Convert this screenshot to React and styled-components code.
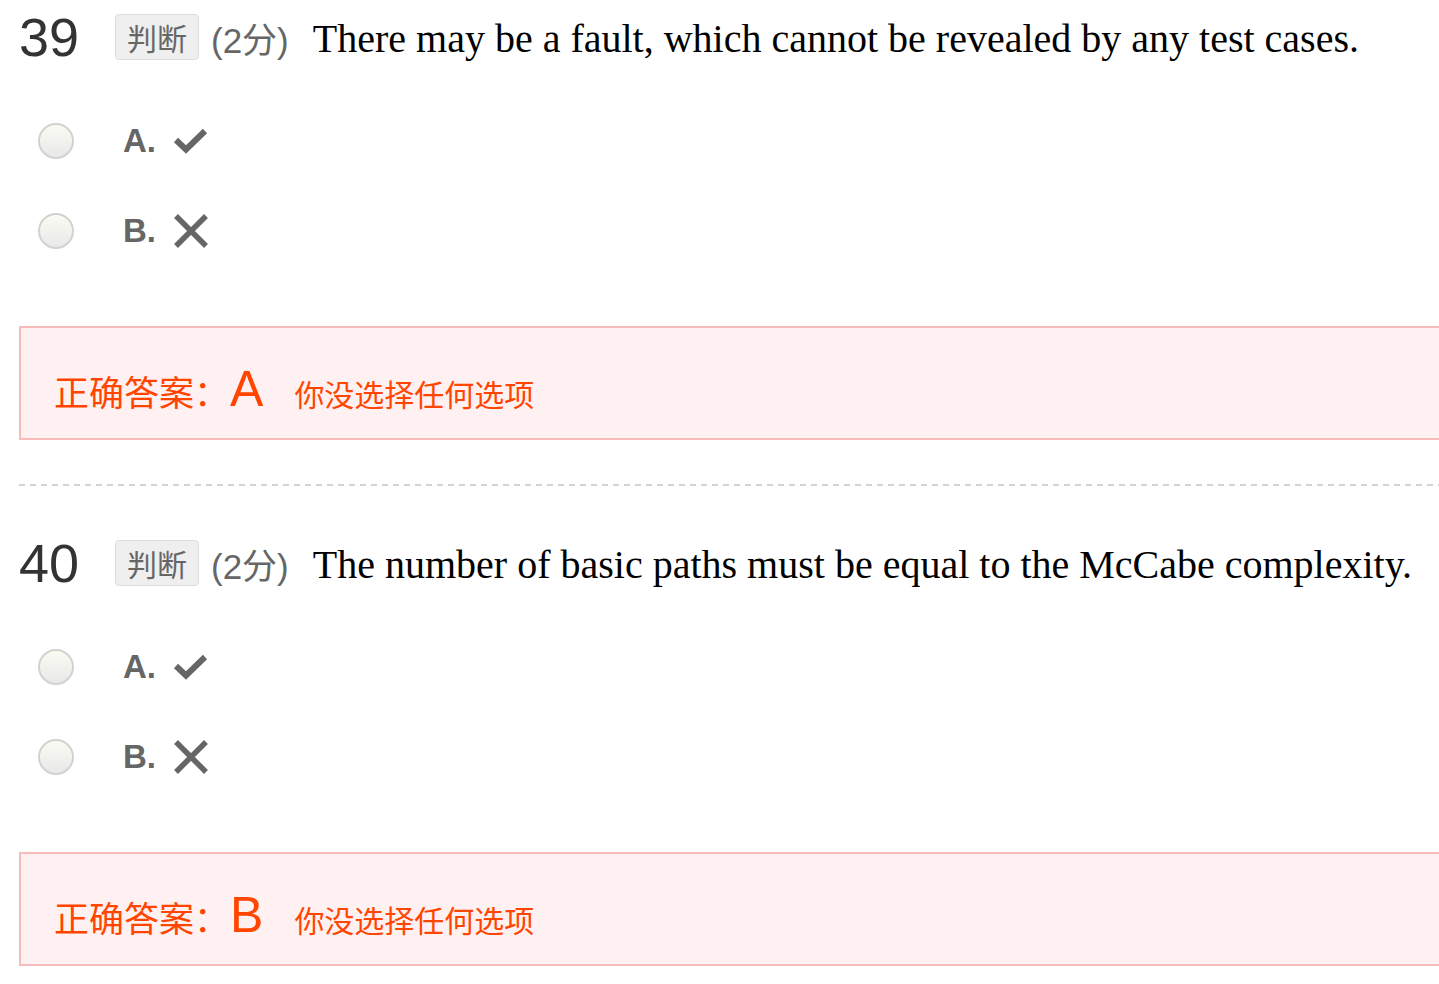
import React from "react";
import styled, { createGlobalStyle } from "styled-components";

const Global = createGlobalStyle`
  html, body { margin: 0; padding: 0; background: #fff; overflow: hidden; }
  body { font-family: "Liberation Sans", Arial, "Noto Sans CJK SC", sans-serif; }
`;

const Page = styled.div`
  padding-left: 19px;
  width: 1460px;
`;

const Question = styled.section``;

const Header = styled.div`
  height: 74px;
  display: flex;
  align-items: center;
`;

const Num = styled.span`
  font-size: 54px;
  line-height: 1;
  color: #333;
  width: 96px;
  flex: none;
`;

const Tag = styled.span`
  box-sizing: border-box;
  height: 46px;
  padding: 0 11px;
  display: inline-flex;
  align-items: center;
  background: #efefef;
  border: 1px solid #dcdcdc;
  border-radius: 4px;
  font-family: "Noto Sans CJK SC", sans-serif;
  font-size: 30px;
  color: #666;
  margin-right: 12px;
`;

const Points = styled.span`
  font-family: "Liberation Sans", "Noto Sans CJK SC", sans-serif;
  font-size: 35px;
  color: #666;
  margin-right: 24px;
  white-space: nowrap;
`;

const Title = styled.span`
  font-family: "Liberation Serif", "Times New Roman", serif;
  font-size: 40px;
  color: #000;
  white-space: nowrap;
  padding-top: 2px;
`;

const Options = styled.div`
  display: flex;
  flex-direction: column;
  padding-top: 22px;
  padding-left: 19px;
`;

const Option = styled.label`
  height: 90px;
  display: flex;
  align-items: center;
`;

const Radio = styled.span`
  box-sizing: border-box;
  width: 36px;
  height: 36px;
  border-radius: 50%;
  border: 2px solid #d2d2d2;
  background: linear-gradient(#fbfbf4, #e8e8e8);
  box-shadow: inset 0 1px 0 #fbfbe8;
  margin-right: 49px;
  flex: none;
`;

const Letter = styled.span`
  font-family: "Liberation Sans", Arial, sans-serif;
  font-weight: bold;
  font-size: 33px;
  color: #666;
  width: 50px;
`;

const Icon = styled.svg`
  width: 36px;
  height: 36px;
  display: block;
`;

const AnswerBox = styled.div`
  box-sizing: border-box;
  margin-top: 50px;
  height: 114px;
  width: 1440px;
  border: 2px solid #f6bcbc;
  background: #fff1f1;
  display: flex;
  align-items: baseline;
  padding: 32px 0 0 33px;
  color: #ff4500;
`;

const AnswerLabel = styled.span`
  font-family: "Noto Sans CJK SC", sans-serif;
  font-size: 35px;
`;

const AnswerLetter = styled.span`
  font-family: "Liberation Sans", Arial, sans-serif;
  font-size: 50px;
  margin: 0 31px 0 1px;
`;

const AnswerNote = styled.span`
  font-family: "Noto Sans CJK SC", sans-serif;
  font-size: 30px;
`;

const Divider = styled.hr`
  border: none;
  height: 2px;
  margin: 44px 0 40px;
  background: repeating-linear-gradient(90deg, #d4d4d4 0 6px, transparent 6px 11px);
`;

const Check = () => (
  <Icon viewBox="0 0 36 36">
    <path d="M3 17 L13 26.5 L32 8" fill="none" stroke="#666" strokeWidth="6" />
  </Icon>
);

const Cross = () => (
  <Icon viewBox="0 0 36 36">
    <path d="M3 3 L33 33 M33 3 L3 33" fill="none" stroke="#666" strokeWidth="5.5" />
  </Icon>
);

const questions = [
  { n: 39, text: "There may be a fault, which cannot be revealed by any test cases.", answer: "A" },
  { n: 40, text: "The number of basic paths must be equal to the McCabe complexity.", answer: "B" },
];

export default function App() {
  return (
    <>
      <Global />
      <Page>
        {questions.map((q, i) => (
          <React.Fragment key={q.n}>
            <Question>
              <Header>
                <Num>{q.n}</Num>
                <Tag>判断</Tag>
                <Points>(2分)</Points>
                <Title>{q.text}</Title>
              </Header>
              <Options>
                <Option>
                  <Radio />
                  <Letter>A.</Letter>
                  <Check />
                </Option>
                <Option>
                  <Radio />
                  <Letter>B.</Letter>
                  <Cross />
                </Option>
              </Options>
              <AnswerBox>
                <AnswerLabel>正确答案：</AnswerLabel>
                <AnswerLetter>{q.answer}</AnswerLetter>
                <AnswerNote>你没选择任何选项</AnswerNote>
              </AnswerBox>
            </Question>
            {i === 0 && <Divider />}
          </React.Fragment>
        ))}
      </Page>
    </>
  );
}
